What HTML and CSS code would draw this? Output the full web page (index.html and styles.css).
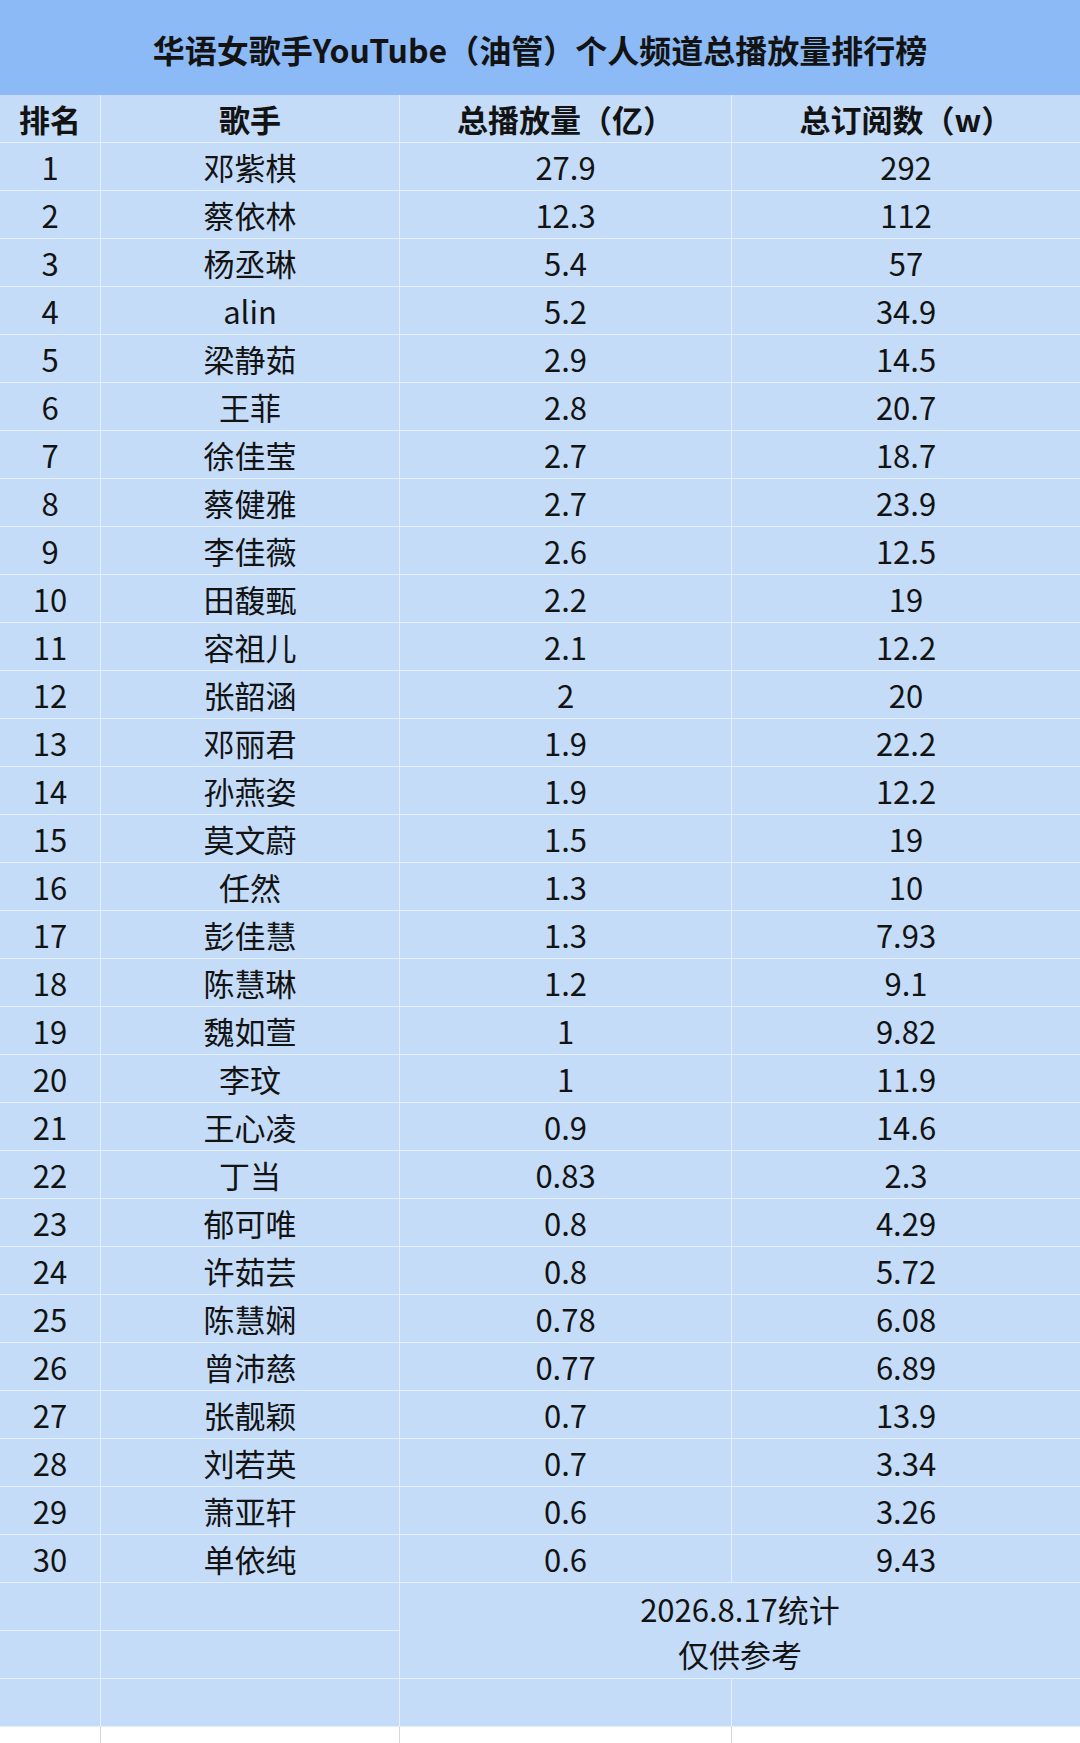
FILE: index.html
```html
<!DOCTYPE html>
<html lang="zh-CN">
<head>
<meta charset="utf-8">
<title>华语女歌手YouTube（油管）个人频道总播放量排行榜</title>
<link rel="stylesheet" href="styles.css">
</head>
<body>
<div class="page">
  <div class="title">华语女歌手YouTube（油管）个人频道总播放量排行榜</div>
  <div class="grid">
    <div class="cell head">排名</div><div class="cell head">歌手</div><div class="cell head">总播放量（亿）</div><div class="cell head">总订阅数（w）</div>
    <div class="cell">1</div><div class="cell">邓紫棋</div><div class="cell">27.9</div><div class="cell">292</div>
    <div class="cell">2</div><div class="cell">蔡依林</div><div class="cell">12.3</div><div class="cell">112</div>
    <div class="cell">3</div><div class="cell">杨丞琳</div><div class="cell">5.4</div><div class="cell">57</div>
    <div class="cell">4</div><div class="cell">alin</div><div class="cell">5.2</div><div class="cell">34.9</div>
    <div class="cell">5</div><div class="cell">梁静茹</div><div class="cell">2.9</div><div class="cell">14.5</div>
    <div class="cell">6</div><div class="cell">王菲</div><div class="cell">2.8</div><div class="cell">20.7</div>
    <div class="cell">7</div><div class="cell">徐佳莹</div><div class="cell">2.7</div><div class="cell">18.7</div>
    <div class="cell">8</div><div class="cell">蔡健雅</div><div class="cell">2.7</div><div class="cell">23.9</div>
    <div class="cell">9</div><div class="cell">李佳薇</div><div class="cell">2.6</div><div class="cell">12.5</div>
    <div class="cell">10</div><div class="cell">田馥甄</div><div class="cell">2.2</div><div class="cell">19</div>
    <div class="cell">11</div><div class="cell">容祖儿</div><div class="cell">2.1</div><div class="cell">12.2</div>
    <div class="cell">12</div><div class="cell">张韶涵</div><div class="cell">2</div><div class="cell">20</div>
    <div class="cell">13</div><div class="cell">邓丽君</div><div class="cell">1.9</div><div class="cell">22.2</div>
    <div class="cell">14</div><div class="cell">孙燕姿</div><div class="cell">1.9</div><div class="cell">12.2</div>
    <div class="cell">15</div><div class="cell">莫文蔚</div><div class="cell">1.5</div><div class="cell">19</div>
    <div class="cell">16</div><div class="cell">任然</div><div class="cell">1.3</div><div class="cell">10</div>
    <div class="cell">17</div><div class="cell">彭佳慧</div><div class="cell">1.3</div><div class="cell">7.93</div>
    <div class="cell">18</div><div class="cell">陈慧琳</div><div class="cell">1.2</div><div class="cell">9.1</div>
    <div class="cell">19</div><div class="cell">魏如萱</div><div class="cell">1</div><div class="cell">9.82</div>
    <div class="cell">20</div><div class="cell">李玟</div><div class="cell">1</div><div class="cell">11.9</div>
    <div class="cell">21</div><div class="cell">王心凌</div><div class="cell">0.9</div><div class="cell">14.6</div>
    <div class="cell">22</div><div class="cell">丁当</div><div class="cell">0.83</div><div class="cell">2.3</div>
    <div class="cell">23</div><div class="cell">郁可唯</div><div class="cell">0.8</div><div class="cell">4.29</div>
    <div class="cell">24</div><div class="cell">许茹芸</div><div class="cell">0.8</div><div class="cell">5.72</div>
    <div class="cell">25</div><div class="cell">陈慧娴</div><div class="cell">0.78</div><div class="cell">6.08</div>
    <div class="cell">26</div><div class="cell">曾沛慈</div><div class="cell">0.77</div><div class="cell">6.89</div>
    <div class="cell">27</div><div class="cell">张靓颖</div><div class="cell">0.7</div><div class="cell">13.9</div>
    <div class="cell">28</div><div class="cell">刘若英</div><div class="cell">0.7</div><div class="cell">3.34</div>
    <div class="cell">29</div><div class="cell">萧亚轩</div><div class="cell">0.6</div><div class="cell">3.26</div>
    <div class="cell">30</div><div class="cell">单依纯</div><div class="cell">0.6</div><div class="cell">9.43</div>
    <div class="cell"></div><div class="cell"></div><div class="cell note">2026.8.17统计<br>仅供参考</div>
    <div class="cell"></div><div class="cell"></div>
    <div class="cell"></div><div class="cell"></div><div class="cell"></div><div class="cell"></div>
  </div>
  <div class="tail">
    <div class="blank"></div><div class="blank"></div><div class="blank"></div><div class="blank"></div>
  </div>
</div>
</body>
</html>
```
FILE: styles.css
```css
html, body {
  margin: 0;
  padding: 0;
  background: #ffffff;
}
.page {
  width: 1080px;
  font-family: "Noto Sans CJK SC", "Noto Sans", sans-serif;
  color: #131313;
}
.title {
  height: 95px;
  background: #8bbaf6;
  display: flex;
  align-items: center;
  justify-content: center;
  font-size: 32px;
  font-weight: 700;
  padding-top: 2px;
  box-sizing: border-box;
}
.grid {
  display: grid;
  grid-template-columns: 100px 298px 331px 348px;
  grid-auto-rows: 47px;
  gap: 1px;
  background: #e4effd;
  padding-bottom: 1px;
}
.cell {
  background: #c5dcf9;
  display: flex;
  align-items: center;
  justify-content: center;
  font-size: 31px;
  line-height: 1;
  box-sizing: border-box;
}
.head {
  font-weight: 700;
  font-size: 31px;
}
.note {
  grid-column: 3 / span 2;
  grid-row: span 2;
  text-align: center;
  line-height: 45px;
  flex-direction: column;
}
.tail {
  display: grid;
  grid-template-columns: 100px 298px 331px 348px;
  gap: 1px;
  height: 16px;
  background: #d6d6d6;
}
.blank {
  background: #ffffff;
}
```
